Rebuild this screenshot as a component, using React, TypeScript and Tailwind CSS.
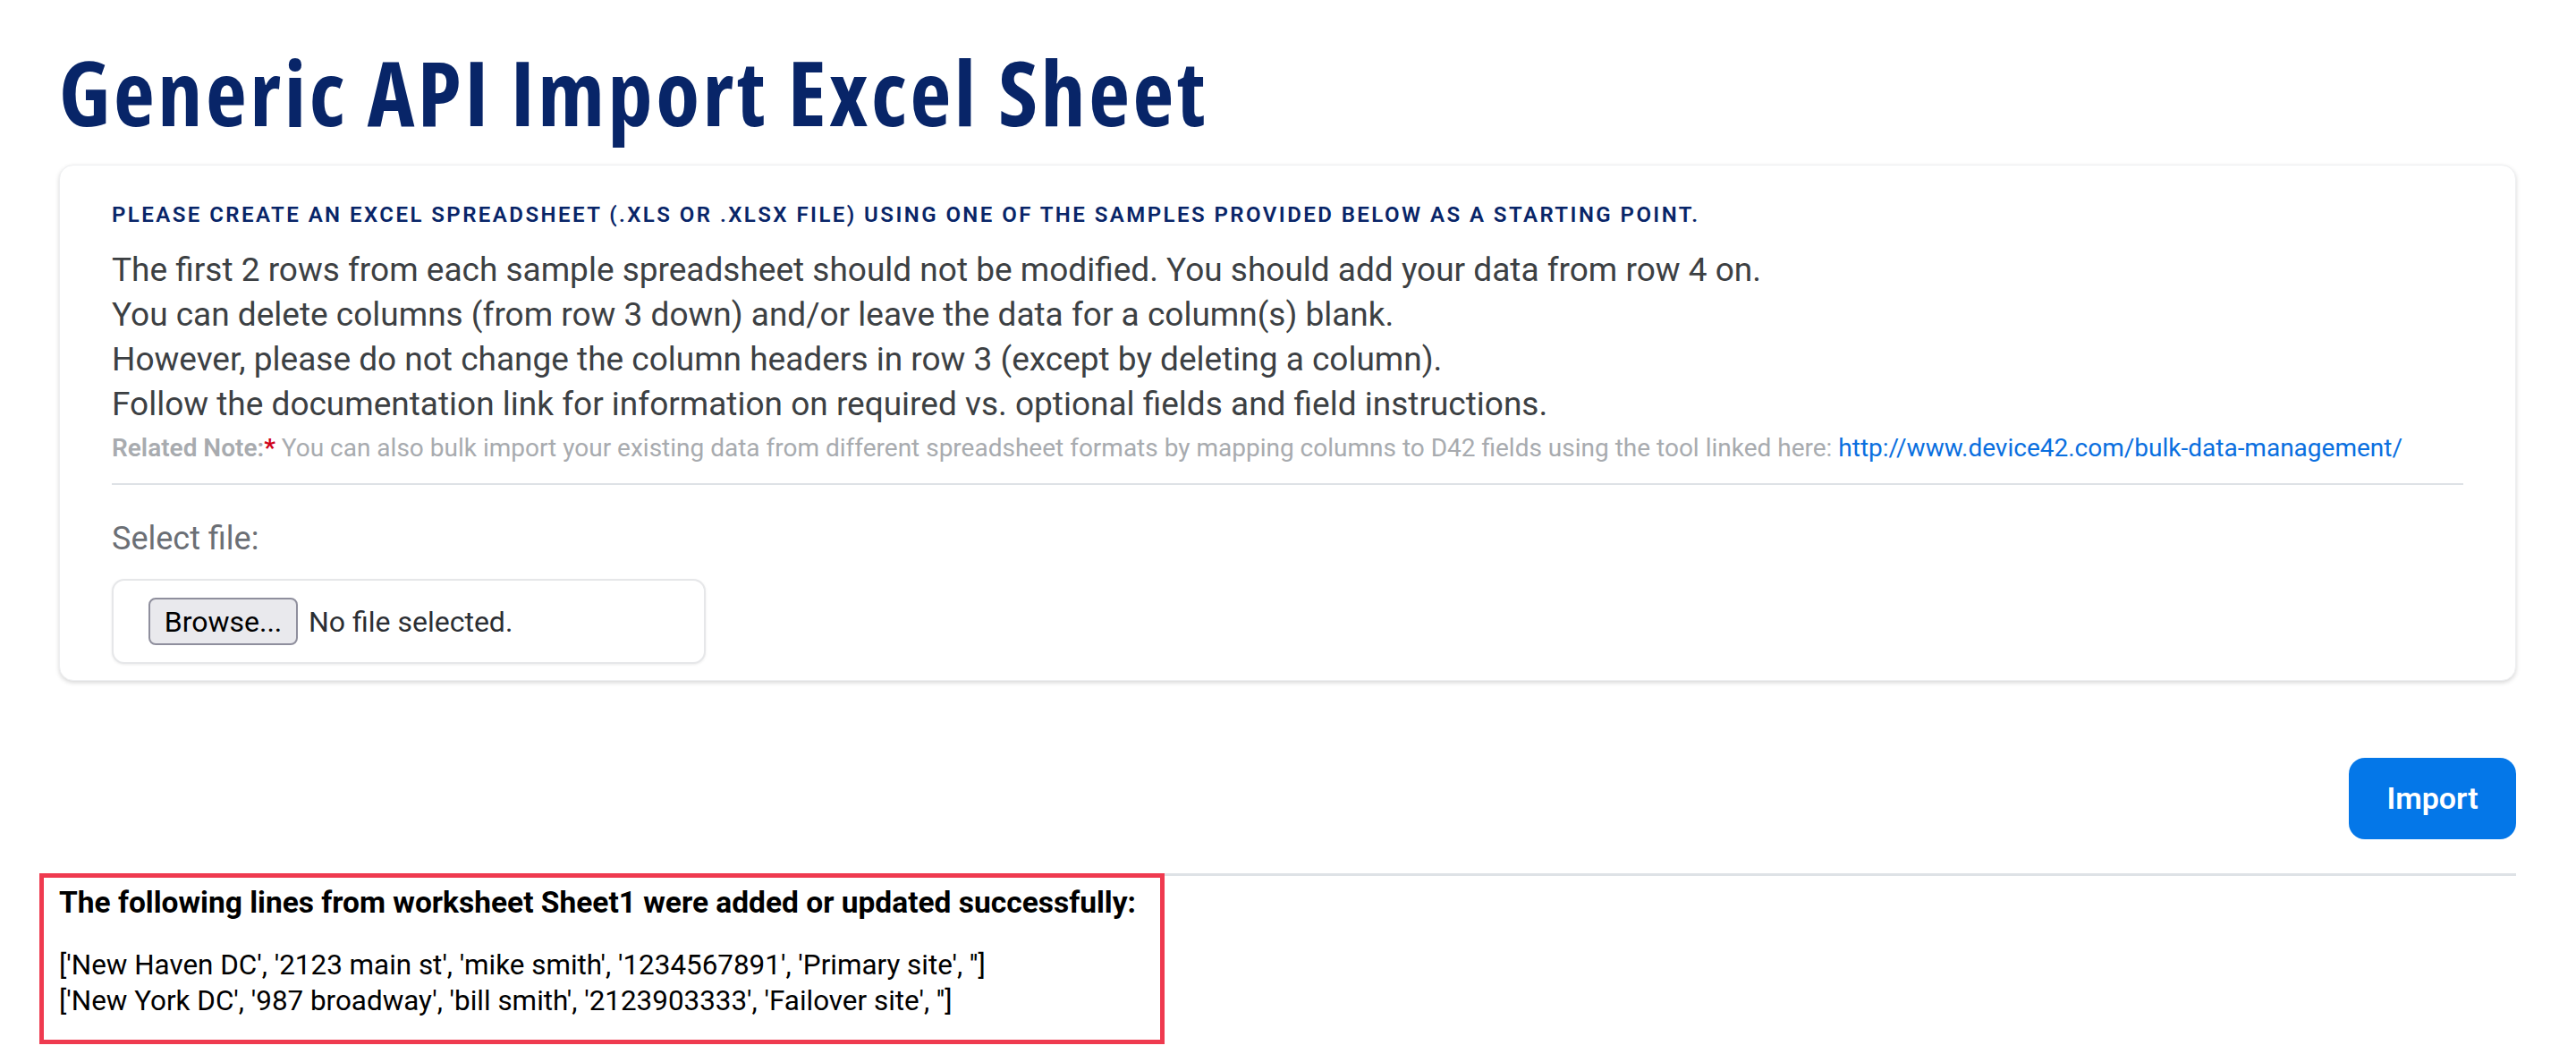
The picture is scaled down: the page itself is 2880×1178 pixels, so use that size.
import React from 'react';

const bodyFont = { fontFamily: 'Roboto, "Noto Sans", sans-serif' };

const INSTRUCTIONS = [
  'The first 2 rows from each sample spreadsheet should not be modified. You should add your data from row 4 on.',
  'You can delete columns (from row 3 down) and/or leave the data for a column(s) blank.',
  'However, please do not change the column headers in row 3 (except by deleting a column).',
  'Follow the documentation link for information on required vs. optional fields and field instructions.',
];

const RESULT_LINES = [
  "['New Haven DC', '2123 main st', 'mike smith', '1234567891', 'Primary site', '']",
  "['New York DC', '987 broadway', 'bill smith', '2123903333', 'Failover site', '']",
];

function FileField() {
  return (
    <div className="flex h-[95px] w-[664px] items-center rounded-[14px] border-2 border-[#e6e7e9] bg-white pl-[39px] shadow-[0_1px_3px_rgba(0,0,0,0.08)]">
      <button
        type="button"
        className="h-[53px] w-[167px] rounded-[8px] border-2 border-[#8f8f9d] bg-[#e9e9ed] text-[32px] leading-none text-black"
      >
        Browse...
      </button>
      <span className="ml-[12px] text-[32px] text-[#2b2e33]">No file selected.</span>
    </div>
  );
}

export default function App() {
  return (
    <div className="min-h-[1178px] bg-white px-[66px] pr-[67px] pt-[52px]" style={bodyFont}>
      <h1
        className="text-[100px] font-bold leading-none tracking-[0.036em] text-[#082568] [font-stretch:75%]"
        style={{ fontFamily: '"Open Sans", Roboto, sans-serif' }}
      >
        Generic API Import Excel Sheet
      </h1>

      <div className="mt-[32px] rounded-[16px] border border-[#eeeff1] bg-white px-[58px] pb-[18px] pt-[37px] shadow-[0_2px_5px_rgba(0,0,0,0.16)]">
        <h2 className="text-[24px] font-semibold uppercase leading-[36px] tracking-[0.102em] text-[#082568]">
          Please create an Excel spreadsheet (.xls or .xlsx file) using one of the samples provided below as a starting point.
        </h2>

        <div className="mt-[19px] text-[37px] leading-[50px] text-[#3c4043]">
          {INSTRUCTIONS.map((line) => (
            <p key={line}>{line}</p>
          ))}
        </div>

        <p className="text-[28px] leading-[48px] text-[#a8abaf]">
          <span className="font-semibold">Related Note:</span>
          <span className="font-bold text-[#d0021b]">*</span>{' '}
          You can also bulk import your existing data from different spreadsheet formats by mapping columns to D42 fields using the tool linked here:{' '}
          <a href="#" className="text-[#0a6fdf]">http://www.device42.com/bulk-data-management/</a>
        </p>

        <div className="mt-[15px] h-[2px] bg-[#dee2e6]" />

        <label className="mt-[35px] block text-[36px] leading-[50px] text-[#6b6f75]">Select file:</label>

        <div className="mt-[20px]">
          <FileField />
        </div>
      </div>

      <div className="mt-[86px] flex justify-end">
        <button
          type="button"
          className="h-[91px] w-[187px] rounded-[18px] bg-[#0477e8] text-[34px] font-semibold text-white"
        >
          Import
        </button>
      </div>

      <div className="mt-[38px] border-t-[3px] border-[#dee2e6]">
        <div className="-ml-[22px] -mt-[3px] w-fit border-[5px] border-[#ef3a4f] pb-[23px] pl-[17px] pr-[27px] pt-[8px] leading-[40px] text-black">
          <p className="text-[33.5px] font-bold">The following lines from worksheet Sheet1 were added or updated successfully:</p>
          <div className="mt-[30px] text-[31.4px]">
            {RESULT_LINES.map((line) => (
              <p key={line}>{line}</p>
            ))}
          </div>
        </div>
      </div>
    </div>
  );
}
